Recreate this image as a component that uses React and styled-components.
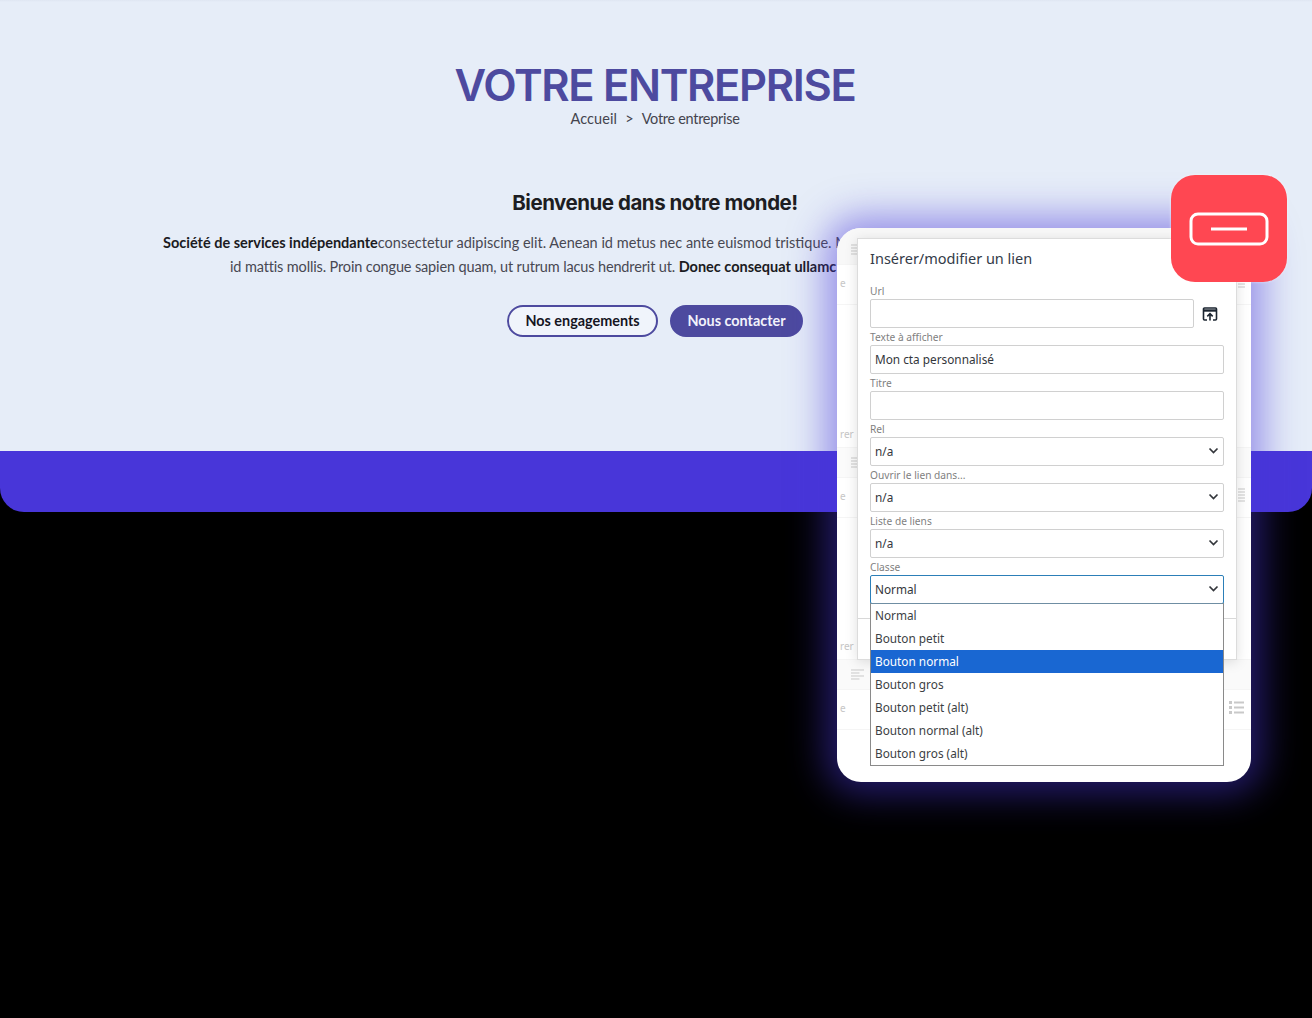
import React from "react";
import styled, { createGlobalStyle } from "styled-components";

const Global = createGlobalStyle`
  html, body { margin: 0; padding: 0; background: #000; }
  body { font-family: "Lato", "Liberation Sans", sans-serif; }
  * { box-sizing: border-box; }
`;
const Page = styled.div`position: relative; width: 1312px; height: 1018px; background: #000; overflow: hidden;`;
const Top = styled.section`display: flex; flex-direction: column; border-radius: 0 0 24px 24px; overflow: hidden;`;
const Hero = styled.div`
  height: 451px; background: linear-gradient(#dfe6f2 0, #e6edf8 2px);
  display: flex; flex-direction: column; align-items: center; padding: 60px 2px 0 0;
`;
const Band = styled.div`height: 61px; background: #4836d9;`;
const Title = styled.h1`
  margin: 0; font: 600 43.5px/50px "Inter", sans-serif; letter-spacing: -1.34px; color: #4d4a9f; white-space: nowrap;
`;
const Crumb = styled.div`
  font: 400 14.5px/17px "Lato", sans-serif; color: #44444e; display: flex; gap: 8px; white-space: pre; letter-spacing: 0.1px;
  span:last-child { letter-spacing: -0.3px; }
`;
const Subtitle = styled.h2`
  margin: 63px 0 0; font: 700 20.5px/26px "Inter", sans-serif; letter-spacing: -0.47px; color: #1d1d22;
`;
const Lines = styled.div`margin-top: 15px; display: flex; flex-direction: column; align-items: center;`;
const Line = styled.p`
  margin: 0; font: 400 14.5px/24px "Lato", sans-serif; color: #484852; white-space: nowrap; overflow: hidden;
  width: ${p => p.$w}px; letter-spacing: ${p => p.$ls}px;
  b { font-weight: 700; color: #1b1b22; letter-spacing: 0; }
`;
const Buttons = styled.div`margin-top: 26px; display: flex; gap: 12px;`;
const Pill = styled.a`
  display: flex; align-items: center; justify-content: center; height: 32px; width: ${p => p.$w}px;
  border-radius: 16px; font: 700 14.4px/1 "Lato", sans-serif;
  border: 2px solid #4d4a9f;
  background: ${p => (p.$fill ? "#4d4a9f" : "#f0f4fb")}; color: ${p => (p.$fill ? "#f2f2fb" : "#15151f")};
`;

const Card = styled.div`
  position: absolute; left: 837px; top: 228px; width: 414px; height: 554px;
  display: grid; grid-template: 1fr / 1fr;
  background: #fff; border-radius: 24px;
  box-shadow: 0 0 36px 12px rgba(72, 54, 217, 0.5);
`;
const Backdrop = styled.div`
  grid-area: 1 / 1; border-radius: 24px; overflow: hidden; display: flex; flex-direction: column;
`;
const EditorRow = styled.div`
  flex: none; height: ${p => p.$h}px; display: flex; align-items: center; justify-content: space-between;
  padding: ${p => p.$pad || "0 7px 0 3px"};
  background: ${p => p.$bg || "#fff"}; border-bottom: ${p => (p.$plain ? "0" : "1px solid #f5f5f5")};
`;
const HintText = styled.span`font: 400 10px/12px "Noto Sans", sans-serif; color: #c6c6c6;`;
const HintIcon = styled.svg`flex: none; color: #c9c9c9;`;
const Dialog = styled.div`
  grid-area: 1 / 1; align-self: start; margin: 10px 0 0 20px; width: 380px; height: 422px; background: #fff;
  border: 1px solid #dcdcdc; box-shadow: 0 2px 12px rgba(0,0,0,.13);
  padding: 0 12px; font-family: "Noto Sans", "Open Sans", sans-serif;
`;
const DialogTitle = styled.div`font-size: 14.5px; line-height: 20px; color: #333b48; margin: 9px 0 16px;`;
const Label = styled.div`font-size: 10.2px; line-height: 14px; color: #7f7f7f; height: 15px;`;
const Field = styled.div`
  height: 29px; margin-bottom: 2px; display: flex; align-items: center; justify-content: space-between; padding: 0 4px 2px;
  border: 1px solid ${p => (p.$focus ? "#2c7fb8" : "#d0d0d0")}; border-radius: 2px; background: #fff;
  font-size: 11.8px; color: #33363b; width: ${p => p.$w || 354}px;
`;
const FieldRow = styled.div`display: flex; align-items: flex-start; gap: 8px;`;
const PickIcon = styled.svg`margin-top: 7px; flex: none;`;
const Footer = styled.div`margin: 14px -12px 0; border-top: 1px solid #d8d8d8;`;
const List = styled.ul`
  position: absolute; left: 33px; top: 375px; width: 354px; height: 163px; margin: 0; padding: 0; list-style: none;
  background: #fff; border: 1px solid #8a8a8a; border-top-color: #6f8ea3; font-family: "Noto Sans", "Open Sans", sans-serif;
`;
const Option = styled.li`
  height: 23px; padding: 0 4px; font-size: 11.8px; line-height: 23px; white-space: nowrap;
  background: ${p => (p.$on ? "#1967d2" : "transparent")}; color: ${p => (p.$on ? "#fff" : "#3c3f44")};
`;
const Badge = styled.div`
  position: absolute; left: 1171px; top: 175px; width: 116px; height: 107px; border-radius: 24px; background: #ff4752;
  display: flex; align-items: center; justify-content: center; box-shadow: 0 0 3px rgba(255,255,255,.6);
`;

const Chev = () => (
  <svg width="11" height="9" viewBox="0 0 11 9" fill="none" stroke="#33363b" strokeWidth="1.7">
    <path d="M1.5 2.5 5.5 6.5 9.5 2.5" />
  </svg>
);
const Bars = ({ n = 4, w = 7, alt }) => (
  <HintIcon width={w} height={n * 3} viewBox={`0 0 ${w} ${n * 3}`} fill="none" stroke="currentColor">
    {Array.from({ length: n }).map((_, i) => <path key={i} d={`M0 ${i * 3 + 1}H${alt && i % 2 ? w * 0.65 : w}`} />)}
  </HintIcon>
);
const ListIcon = () => (
  <HintIcon width="15" height="13" viewBox="0 0 15 13" fill="currentColor">
    <rect x="0" y="0" width="3" height="3" /><rect x="0" y="5" width="3" height="3" /><rect x="0" y="10" width="3" height="3" />
    <rect x="5" y="0.5" width="10" height="2" /><rect x="5" y="5.5" width="10" height="2" /><rect x="5" y="10.5" width="10" height="2" />
  </HintIcon>
);
const options = ["Normal", "Bouton petit", "Bouton normal", "Bouton gros", "Bouton petit (alt)", "Bouton normal (alt)", "Bouton gros (alt)"];

export default function App() {
  return (
    <Page>
      <Global />
      <Top>
        <Hero>
          <Title>VOTRE ENTREPRISE</Title>
          <Crumb><span>Accueil</span><span>&gt;</span><span>Votre entreprise</span></Crumb>
          <Subtitle>Bienvenue dans notre monde!</Subtitle>
          <Lines>
            <Line $w={984} $ls={0}><b>Société de services indépendante</b>consectetur adipiscing elit. Aenean id metus nec ante euismod tristique. M</Line>
            <Line $w={850} $ls={-0.14}>id mattis mollis. Proin congue sapien quam, ut rutrum lacus hendrerit ut. <b>Donec consequat ullamc</b></Line>
          </Lines>
          <Buttons>
            <Pill $w={151}>Nos engagements</Pill>
            <Pill $fill $w={133}>Nous contacter</Pill>
          </Buttons>
        </Hero>
        <Band />
      </Top>
      <Card>
        <Backdrop>
          <EditorRow $h={37} $bg="#f8f8f8" $pad="7px 0 0 14px"><Bars /></EditorRow>
          <EditorRow $h={40} $pad="0 6px 4px 3px"><HintText>e</HintText><Bars /></EditorRow>
          <EditorRow $h={115} $plain />
          <EditorRow $h={28}><HintText>rer</HintText></EditorRow>
          <EditorRow $h={30} $bg="#fbfbfb" $pad="0 0 0 14px"><Bars /></EditorRow>
          <EditorRow $h={40} $pad="0 6px 4px 3px"><HintText>e</HintText><Bars n={5} /></EditorRow>
          <EditorRow $h={114} $plain />
          <EditorRow $h={28}><HintText>rer</HintText></EditorRow>
          <EditorRow $h={30} $bg="#fafafa" $pad="0 0 0 14px"><Bars w={13} alt /></EditorRow>
          <EditorRow $h={40} $pad="0 7px 4px 3px"><HintText>e</HintText><ListIcon /></EditorRow>
        </Backdrop>
        <Dialog>
          <DialogTitle>Insérer/modifier un lien</DialogTitle>
          <Label>Url</Label>
          <FieldRow>
            <Field $w={324} />
            <PickIcon width="16" height="16" viewBox="0 0 16 16" fill="none" stroke="#1b2530" strokeWidth="1.6">
              <path d="M5 14H2.5a1 1 0 0 1-1-1V3a1 1 0 0 1 1-1h11a1 1 0 0 1 1 1v10a1 1 0 0 1-1 1H11" />
              <path d="M1.5 4.5h13" strokeWidth="2.4" />
              <path d="M8 14.5V8M5.3 10.4 8 7.7l2.7 2.7" />
            </PickIcon>
          </FieldRow>
          <Label>Texte à afficher</Label>
          <Field>Mon cta personnalisé</Field>
          <Label>Titre</Label>
          <Field />
          <Label>Rel</Label>
          <Field>n/a<Chev /></Field>
          <Label>Ouvrir le lien dans...</Label>
          <Field>n/a<Chev /></Field>
          <Label>Liste de liens</Label>
          <Field>n/a<Chev /></Field>
          <Label>Classe</Label>
          <Field $focus>Normal<Chev /></Field>
          <Footer />
        </Dialog>
        <List>
          {options.map(o => <Option key={o} $on={o === "Bouton normal"}>{o}</Option>)}
        </List>
      </Card>
      <Badge>
        <svg width="80" height="34" viewBox="0 0 80 34" fill="none" stroke="#fff">
          <rect x="2" y="2" width="76" height="30" rx="7" strokeWidth="3" />
          <path d="M22 17H58" strokeWidth="3" />
        </svg>
      </Badge>
    </Page>
  );
}
